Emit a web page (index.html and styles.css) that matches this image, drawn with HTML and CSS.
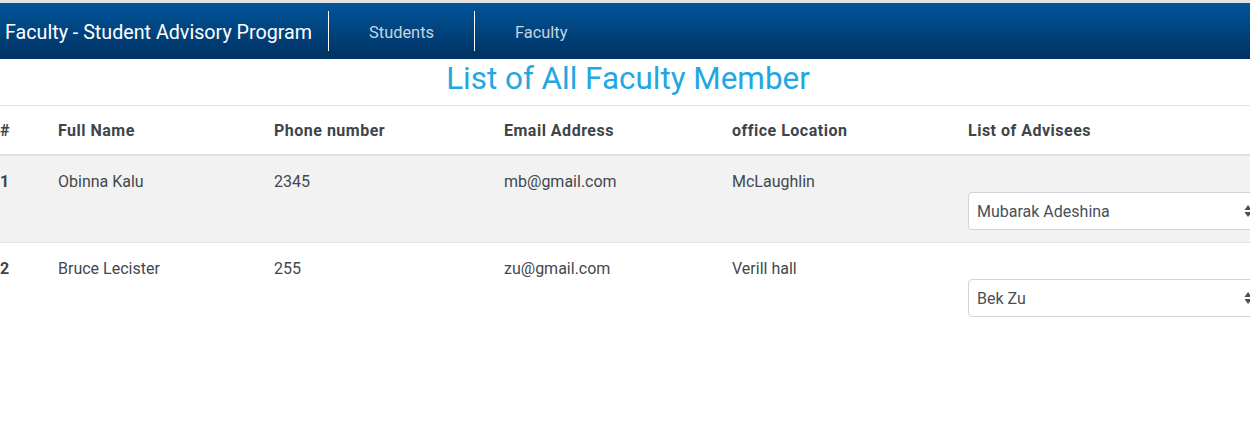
FILE: index.html
```html
<!DOCTYPE html>
<html>
<head>
<meta charset="utf-8">
<link rel="stylesheet" href="styles.css">
</head>
<body>
<nav class="navbar">
  <span class="brand">Faculty - Student Advisory Program</span>
  <ul class="nav">
    <li class="nav-item"><a class="nav-link" href="#">Students</a></li>
    <li class="nav-item"><a class="nav-link" href="#">Faculty</a></li>
  </ul>
</nav>
<h2 class="title">List of All Faculty Member</h2>
<table class="table">
  <thead>
    <tr>
      <th class="c-num">#</th>
      <th class="c-name">Full Name</th>
      <th class="c-phone">Phone number</th>
      <th class="c-email">Email Address</th>
      <th class="c-office">office Location</th>
      <th class="c-adv">List of Advisees</th>
    </tr>
  </thead>
  <tbody>
    <tr class="striped">
      <th class="c-num">1</th>
      <td>Obinna Kalu</td>
      <td>2345</td>
      <td>mb@gmail.com</td>
      <td>McLaughlin</td>
      <td>
        <div class="spacer"></div>
        <div class="select-wrap">
          <select class="form-control"><option>Mubarak Adeshina</option></select>
          <svg class="arrows" width="8" height="14" viewBox="0 0 8 14"><path d="M4 1 L7.5 6 H0.5 Z" fill="#4a4f55"/><path d="M4 13 L7.5 8 H0.5 Z" fill="#4a4f55"/></svg>
        </div>
      </td>
    </tr>
    <tr>
      <th class="c-num">2</th>
      <td>Bruce Lecister</td>
      <td>255</td>
      <td>zu@gmail.com</td>
      <td>Verill hall</td>
      <td>
        <div class="spacer"></div>
        <div class="select-wrap">
          <select class="form-control"><option>Bek Zu</option></select>
          <svg class="arrows" width="8" height="14" viewBox="0 0 8 14"><path d="M4 1 L7.5 6 H0.5 Z" fill="#4a4f55"/><path d="M4 13 L7.5 8 H0.5 Z" fill="#4a4f55"/></svg>
        </div>
      </td>
    </tr>
  </tbody>
</table>
</body>
</html>
```

FILE: styles.css
```css
html, body {
  margin: 0;
  padding: 0;
  overflow: hidden;
}
body {
  font-family: Roboto, "Helvetica Neue", Arial, sans-serif;
  font-size: 16px;
  line-height: 1.5;
  color: #42484e;
  background: #fff;
  width: 1250px;
  border-top: 3px solid #e2e2e2;
}
.navbar {
  height: 56px;
  background: linear-gradient(to bottom, #005599, #003263);
  display: flex;
  align-items: center;
  padding-left: 5px;
  box-sizing: border-box;
}
.brand {
  color: #fff;
  font-size: 19.7px;
  line-height: 1;
  margin-right: 16px;
  padding-top: 4px;
}
.nav {
  display: flex;
  list-style: none;
  margin: 0;
  padding: 0;
  height: 40px;
}
.nav-item {
  border-left: 1px solid #fff;
  display: flex;
  align-items: center;
  padding: 0 40px;
}
.nav-link {
  color: rgba(255, 255, 255, 0.78);
  text-decoration: none;
  font-size: 16.4px;
  padding-top: 4px;
}
.title {
  margin: 0;
  text-align: center;
  color: #22a7e2;
  font-weight: 400;
  font-size: 31.4px;
  line-height: 40px;
  padding: 0 0 6px 6px;
}
.table {
  border-collapse: collapse;
  width: 1290px;
  table-layout: fixed;
}
.table th, .table td {
  padding: 12px;
  padding-top: 13px;
  padding-bottom: 11px;
  text-align: left;
  vertical-align: top;
  border-top: 1px solid #dee2e6;
}
.table tbody td, .table tbody th {
  padding-top: 14px;
  padding-bottom: 12px;
}
.table thead th {
  border-bottom: 2px solid #dee2e6;
  font-weight: 700;
  letter-spacing: 0.5px;
  color: #3e444a;
}
.table tbody th {
  color: #3e444a;
}
.table .c-num {
  padding-left: 0;
  width: 34px;
}
.c-name { width: 192px; }
.c-phone { width: 206px; }
.c-email { width: 204px; }
.c-office { width: 212px; }
.striped { background: #f2f2f2; }
.spacer { height: 22px; }
.select-wrap {
  position: relative;
  width: 294px;
}
.form-control {
  display: block;
  width: 100%;
  height: 38px;
  padding: 6px 8px;
  font-family: inherit;
  font-size: 16px;
  color: #495057;
  background: #fff;
  border: 1px solid #ced4da;
  border-radius: 4px;
  -webkit-appearance: none;
  appearance: none;
  box-sizing: border-box;
}
.arrows {
  position: absolute;
  left: 276px;
  top: 12px;
}
```
